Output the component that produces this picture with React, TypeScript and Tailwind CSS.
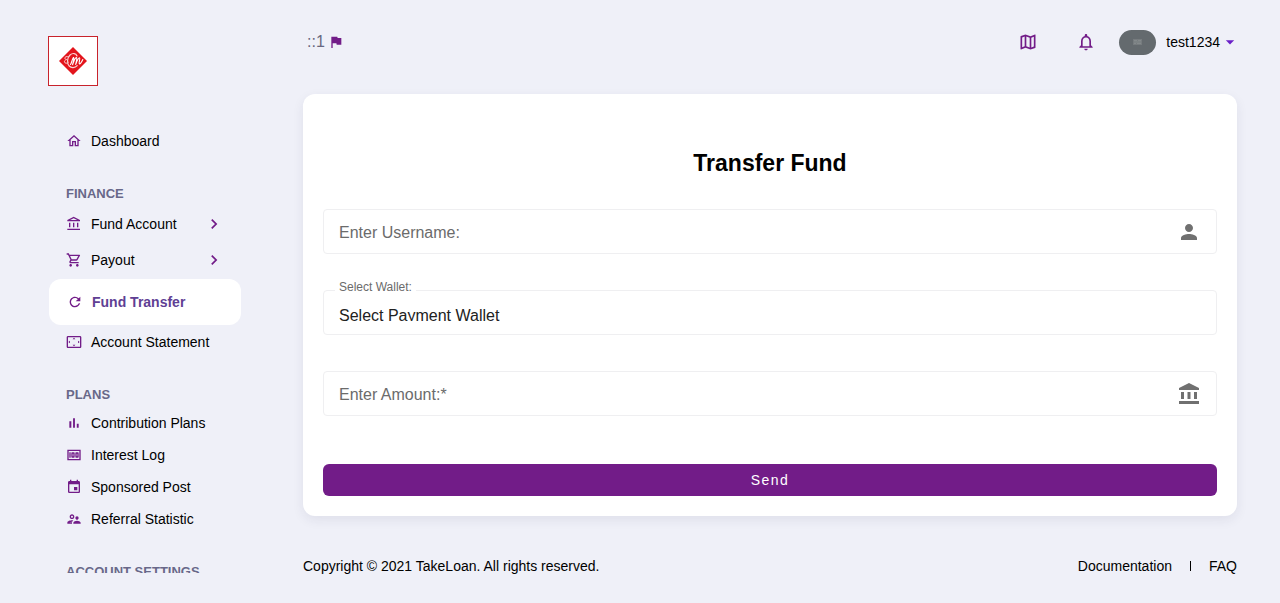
import type { ComponentType, ReactNode } from "react";
import {
  MdArrowDropDown,
  MdAccountBalance,
  MdChevronRight,
  MdEvent,
  MdFlag,
  MdMoney,
  MdNotificationsNone,
  MdOutlineAccountBalance,
  MdOutlineHome,
  MdOutlineMap,
  MdOutlineSettingsOverscan,
  MdOutlineShoppingCart,
  MdOutlineSupervisorAccount,
  MdPerson,
  MdRefresh,
} from "react-icons/md";

type Icon = ComponentType<{ className?: string }>;

function BarsIcon({ className }: { className?: string }) {
  return (
    <svg viewBox="0 0 24 24" fill="currentColor" className={className} aria-hidden="true">
      <path d="M5 9.200h3V19H5zM10.600 5h2.800v14h-2.800zM16.200 13H19v6h-2.800z" />
    </svg>
  );
}

function Logo() {
  return (
    <a href="#" aria-label="Home" className="ml-12 block size-[50px] border border-[#c8232c] bg-white">
      <svg viewBox="0 0 48 48" className="size-full">
        <path d="M24 10 38 24 24 38 10 24Z" fill="#e3151c" />
        <path
          d="M28 19C27 16 23.500 15.800 21 18c-3 2.800-3.200 8.500-.8 11 2 2.200 5.800 2 8-.3"
          fill="none"
          stroke="#fbd5d5"
          strokeWidth="1.200"
          strokeLinecap="round"
        />
        <path
          d="M19.500 19.800c-1.800-.9-4 .2-3.600 1.700.4 1 2 1 2 1s-2.600.5-2.500 2.300c.2 1.700 2.800 2 4 .6"
          fill="none"
          stroke="#f9c4c4"
          strokeWidth="1"
          strokeLinecap="round"
        />
        <path
          d="M21.500 27.500c1.200-1.500 1.600-5.500 3-7 1 1-.4 4.600-.9 7.200 1-2.800 2.200-6.800 3.800-7.200 1.100.4-.3 4.600-.7 6.900 1-2.600 2.300-6.500 3.800-6.600 1.200.4-1.300 5.500 0 6.100 1.200.2 2.300-2.200 3.300-4.400"
          fill="none"
          stroke="#fff"
          strokeWidth="1.100"
          strokeLinecap="round"
          strokeLinejoin="round"
        />
      </svg>
    </a>
  );
}

function NavItem({ icon: Icon, children, expandable = false }: { icon: Icon; children: ReactNode; expandable?: boolean }) {
  return (
    <li>
      <a
        href="#"
        className={expandable ? "flex h-9 items-center gap-[9px] pr-[17px] pl-[17px]" : "flex h-8 items-center gap-[9px] pr-[17px] pl-[17px]"}
      >
        <Icon className="size-4 shrink-0 text-[#721c88]" />
        <span className="flex-1">{children}</span>
        {expandable && <MdChevronRight className="size-5 shrink-0 text-[#721c88]" />}
      </a>
    </li>
  );
}

function NavSection({ title, children }: { title: string; children?: ReactNode }) {
  return (
    <section className="mt-[27px]">
      <h2 className="mb-[2px] pl-[17px] text-[13px] leading-5 font-bold text-[#686889]">{title}</h2>
      <ul>{children}</ul>
    </section>
  );
}

function TextField({ id, label, icon: Icon }: { id: string; label: string; icon: Icon }) {
  return (
    <div className="relative flex h-[45px] items-center rounded border border-[#efeff1] pr-[15px]">
      <input
        id={id}
        placeholder=" "
        className="peer h-full min-w-0 flex-1 rounded bg-transparent px-[15px] text-base text-[#212121] outline-none"
      />
      <label
        htmlFor={id}
        className="pointer-events-none absolute top-[11px] left-[15px] bg-white text-base leading-6 text-[#6b6b6b] peer-focus:-top-3 peer-focus:text-xs peer-[:not(:placeholder-shown)]:-top-3 peer-[:not(:placeholder-shown)]:text-xs"
      >
        {label}
      </label>
      <Icon className="size-6 shrink-0 text-[#707070]" />
    </div>
  );
}

function Sidebar() {
  return (
    <aside className="h-[calc(100vh-30px)] w-[241px] shrink-0 overflow-hidden pt-9 text-sm text-black">
      <Logo />
      <nav className="mt-[39px] ml-[49px]">
        <ul>
          <NavItem icon={MdOutlineHome}>Dashboard</NavItem>
        </ul>
        <NavSection title="FINANCE">
          <NavItem icon={MdOutlineAccountBalance} expandable>
            Fund Account
          </NavItem>
          <NavItem icon={MdOutlineShoppingCart} expandable>
            Payout
          </NavItem>
          <li>
            <a
              href="#"
              aria-current="page"
              className="my-px flex h-[46px] items-center gap-[9px] rounded-xl bg-white pl-[18px] font-bold text-[#603f94]"
            >
              <MdRefresh className="size-4 shrink-0 text-[#721c88]" />
              Fund Transfer
            </a>
          </li>
          <NavItem icon={MdOutlineSettingsOverscan}>Account Statement</NavItem>
        </NavSection>
        <NavSection title="PLANS">
          <NavItem icon={BarsIcon}>Contribution Plans</NavItem>
          <NavItem icon={MdMoney}>Interest Log</NavItem>
          <NavItem icon={MdEvent}>Sponsored Post</NavItem>
          <NavItem icon={MdOutlineSupervisorAccount}>Referral Statistic</NavItem>
        </NavSection>
        <NavSection title="ACCOUNT SETTINGS" />
      </nav>
    </aside>
  );
}

function TopBar() {
  return (
    <header className="flex h-[84px] items-center justify-between">
      <p className="flex items-center gap-[3px] pl-1 text-base text-[#686880]">
        ::1
        <MdFlag className="size-4 text-[#721c88]" />
      </p>
      <div className="flex items-center">
        <button type="button" aria-label="Map" className="text-[#721c88]">
          <MdOutlineMap className="size-5" />
        </button>
        <button type="button" aria-label="Notifications" className="ml-[38px] text-[#721c88]">
          <MdNotificationsNone className="size-5" />
        </button>
        <button type="button" className="-mr-[3px] ml-[23px] flex items-center text-sm text-black">
          <span className="flex h-[25px] w-[37px] items-center justify-center rounded-full bg-[#646a6e]">
            <svg viewBox="0 0 9 6" className="h-[6px] w-[9px]">
              <path d="M0 0h9v6H0z" fill="#767b7e" />
              <path d="M1 1.500h3M5 1.500h3M1 3h7M1 4.500h2M4 4.500h4" stroke="#8b8f91" strokeWidth=".7" />
            </svg>
          </span>
          <span className="ml-[10px]">test1234</span>
          <MdArrowDropDown className="size-5 text-[#6a1fc8]" />
        </button>
      </div>
    </header>
  );
}

export default function App() {
  return (
    <div className="flex min-h-screen bg-[#eff0f8] font-['Liberation_Sans',Arial,sans-serif]">
      <Sidebar />
      <div className="mr-[43px] ml-[62px] flex min-w-0 flex-1 flex-col">
        <TopBar />
        <main className="mt-[10px] rounded-xl bg-white px-5 pt-[53px] pb-5 shadow-[0_4px_12px_rgba(40,40,80,0.08)]">
          <h1 className="text-center text-[23px] leading-8 font-bold text-black">Transfer Fund</h1>
          <form className="mt-[30px]" onSubmit={(event) => event.preventDefault()}>
            <div className="flex flex-col gap-9">
              <TextField id="username" label="Enter Username:" icon={MdPerson} />
              <div className="relative h-[45px] rounded border border-[#efeff1] pt-[9px]">
                <label
                  htmlFor="wallet"
                  className="absolute -top-3 left-[11px] bg-white px-1 text-xs leading-4 text-[#6b6b6b]"
                >
                  Select Wallet:
                </label>
                <div className="h-[21px] overflow-hidden">
                  <select
                    id="wallet"
                    className="h-8 w-full appearance-none bg-transparent px-[15px] text-base text-[#212121] outline-none"
                  >
                    <option>Select Payment Wallet</option>
                  </select>
                </div>
              </div>
              <TextField id="amount" label="Enter Amount:*" icon={MdAccountBalance} />
            </div>
            <button
              type="submit"
              className="mt-12 flex h-8 w-full items-center justify-center rounded-md bg-[#721c88] text-sm tracking-widest text-white"
            >
              Send
            </button>
          </form>
        </main>
        <footer className="mt-10 flex items-center justify-between text-sm text-black">
          <p>Copyright © 2021 TakeLoan. All rights reserved.</p>
          <div className="flex items-center">
            <a href="#">Documentation</a>
            <span className="mx-[18px] h-[10px] w-px bg-black" />
            <a href="#">FAQ</a>
          </div>
        </footer>
      </div>
    </div>
  );
}
